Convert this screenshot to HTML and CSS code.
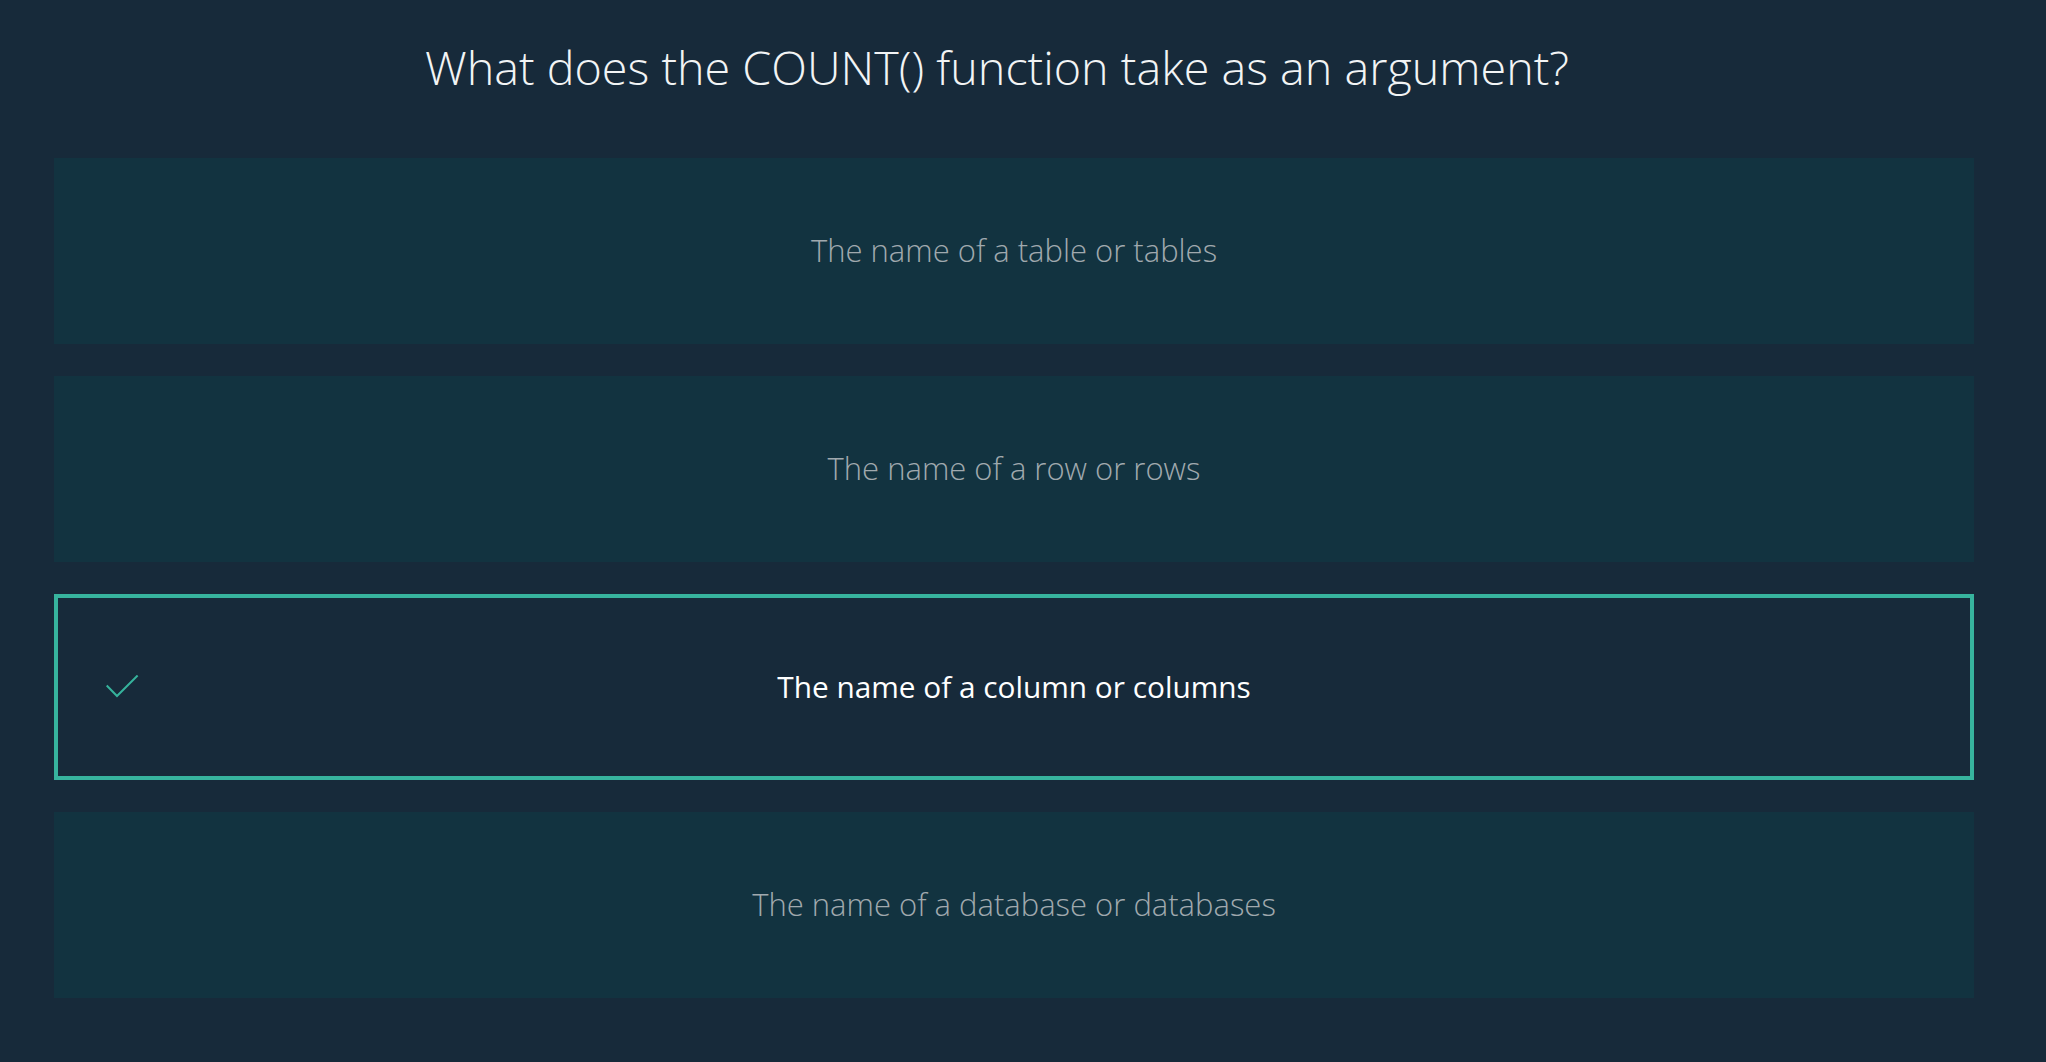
FILE: index.html
```html
<!DOCTYPE html>
<html lang="en">
<head>
<meta charset="utf-8">
<title>Quiz</title>
<link rel="stylesheet" href="styles.css">
</head>
<body>
<main class="quiz">
  <h1 class="question">What does the COUNT() function take as an argument?</h1>
  <ul class="options">
    <li class="option"><span class="mark"></span><span class="label">The name of a table or tables</span><span></span></li>
    <li class="option"><span class="mark"></span><span class="label">The name of a row or rows</span><span></span></li>
    <li class="option option--correct"><span class="mark"><svg class="check" width="33" height="23" viewBox="0 0 33 23"><polyline points="0.7,10.5 11,21 31.6,0.5" fill="none" stroke="#36b39c" stroke-width="2"/></svg></span><span class="label">The name of a column or columns</span><span></span></li>
    <li class="option"><span class="mark"></span><span class="label">The name of a database or databases</span><span></span></li>
  </ul>
</main>
</body>
</html>
```
FILE: styles.css
```css
html, body {
  margin: 0;
  padding: 0;
  background: #172a3a;
}
body {
  font-family: "Open Sans", "Noto Sans", sans-serif;
  color: #ffffff;
}
.quiz {
  width: 1920px;
  margin-left: 54px;
  padding-top: 44px;
}
.question {
  margin: 0;
  padding-right: 34px;
  font-size: 46.7px;
  line-height: 1;
  font-weight: 300;
  text-align: center;
  color: #f2f4f5;
}
.options {
  list-style: none;
  margin: 67px 0 0;
  padding: 0;
  display: flex;
  flex-direction: column;
  gap: 32px;
}
.option {
  box-sizing: border-box;
  height: 186px;
  border: 4px solid transparent;
  background: #123340;
  display: grid;
  grid-template-columns: 1fr auto 1fr;
  align-items: center;
}
.label {
  font-size: 31px;
  font-weight: 300;
  line-height: 1;
  color: #a0a9ae;
  white-space: nowrap;
}
.option--correct {
  background: #172a3a;
  border-color: #37b49e;
}
.option--correct .label {
  color: #ffffff;
  font-weight: 400;
  font-size: 29.8px;
}
.mark {
  display: flex;
  align-items: center;
  padding-left: 48px;
}
.check {
  display: block;
  margin-bottom: 1px;
}
```
